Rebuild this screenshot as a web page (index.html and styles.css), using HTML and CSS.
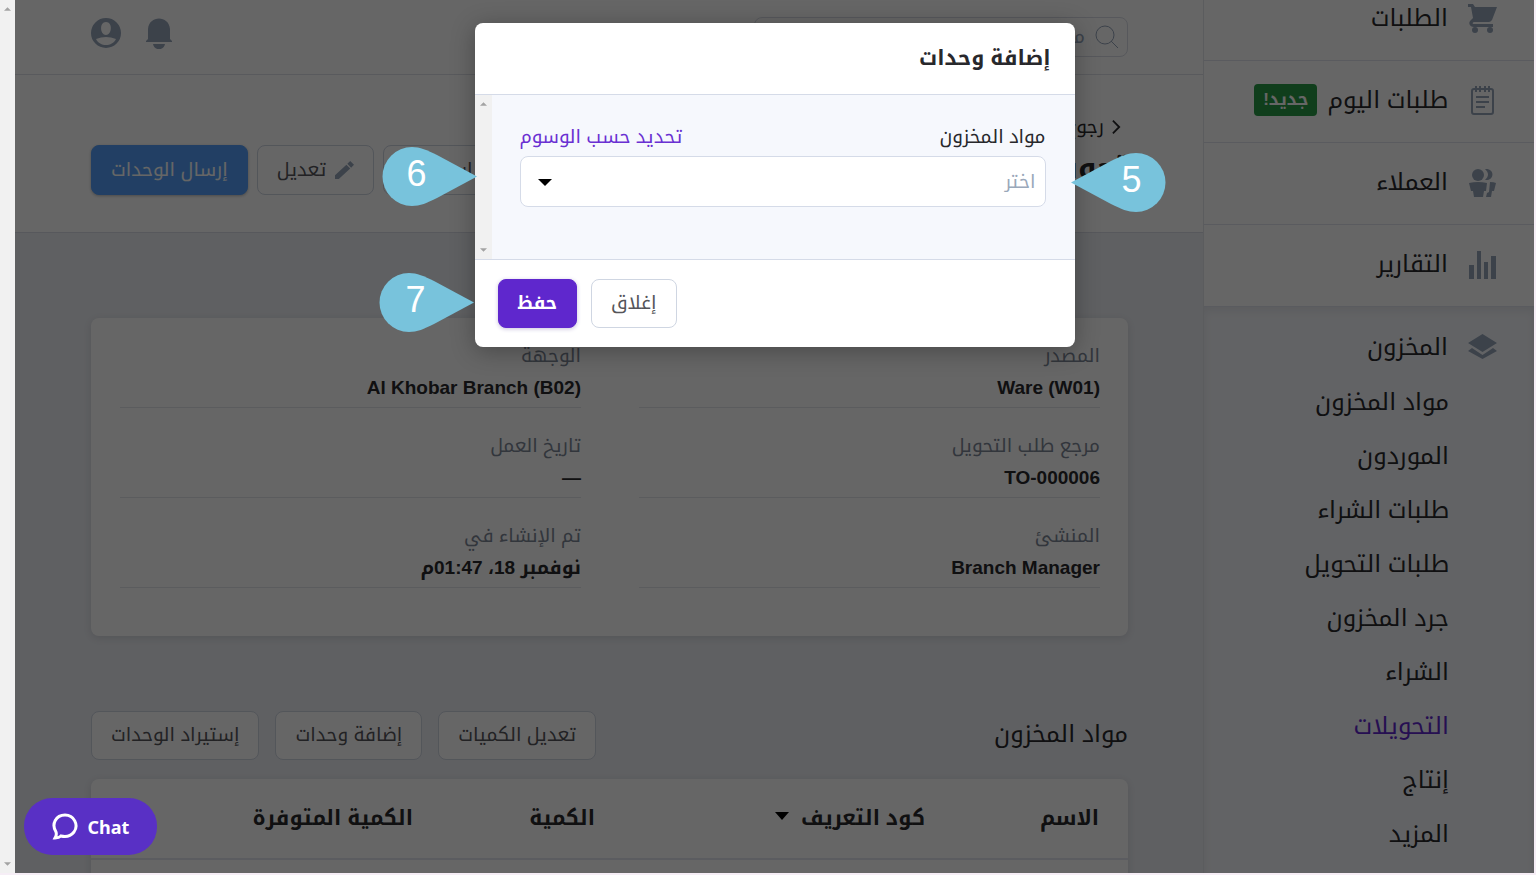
FILE: index.html
```html
<!DOCTYPE html>
<html lang="ar" dir="rtl">
<head>
<meta charset="utf-8">
<meta name="viewport" content="width=device-width, initial-scale=1">
<title>إضافة وحدات</title>
<link rel="stylesheet" href="styles.css">
</head>
<body>
<div class="frame">
  <div class="app">
    <nav class="sidebar" aria-label="القائمة">
      <a class="nav-item nav-item-first" href="#">
        <svg class="nav-icon" viewBox="0 0 29 29"><path d="M0 0h5l2 3h22l-5 13c-1 1-2 2-3 2H7c-3 0-3 2-1 2h19v3H6c-5 0-6-5-3-7l2-2L3 3H0z"/><circle cx="7" cy="26" r="3"/><circle cx="22" cy="26" r="3"/></svg>
        <span>الطلبات</span>
      </a>
      <a class="nav-item" href="#">
        <svg class="nav-icon nav-icon-line" viewBox="0 0 29 29"><rect x="4" y="3" width="21" height="25" rx="2"/><path d="M8 0v6M12 0v6M17 0v6M21 0v6M8 11h13M8 16h13M8 21h9"/></svg>
        <span>طلبات اليوم</span>
        <span class="badge">جديد!</span>
      </a>
      <a class="nav-item" href="#">
        <svg class="nav-icon" viewBox="0 0 29 29"><circle cx="10" cy="7" r="6"/><path d="M17 1c10-1 10 12 0 11 4-4 4-7 0-11zM1 15q9-2 18 0l-1 8h-2l-1 6H6l-1-6H3zM22 14q4 0 6 1l-2 8h-2l-1 6h-5l1-4 2-1z"/></svg>
        <span>العملاء</span>
      </a>
      <a class="nav-item" href="#">
        <svg class="nav-icon" viewBox="0 0 29 29"><path d="M1 15h5v14H1zM9 1h4v28H9zM16 12h4v17h-4zM23 6h5v23h-5z"/></svg>
        <span>التقارير</span>
      </a>
      <div class="nav-section">
        <a class="nav-head" href="#">
          <svg class="nav-icon" viewBox="0 0 29 29"><path d="M14.500 2L29 11 14.500 20 0 11zM4 16L0 19l14.500 8L29 19l-4-3-10.500 7z"/></svg>
          <span>المخزون</span>
        </a>
        <a class="nav-sub" href="#">مواد المخزون</a>
        <a class="nav-sub" href="#">الموردون</a>
        <a class="nav-sub" href="#">طلبات الشراء</a>
        <a class="nav-sub" href="#">طلبات التحويل</a>
        <a class="nav-sub" href="#">جرد المخزون</a>
        <a class="nav-sub" href="#">الشراء</a>
        <a class="nav-sub nav-sub-active" href="#">التحويلات</a>
        <a class="nav-sub" href="#">إنتاج</a>
        <a class="nav-sub" href="#">المزيد</a>
      </div>
    </nav>

    <main class="main">
      <header class="topbar">
        <label class="search">
          <svg class="search-icon" viewBox="0 0 24 24"><circle cx="10" cy="10" r="9"/><path d="M16 16l7 7"/></svg>
          <input class="search-input" type="search" placeholder="مساعدة" aria-label="بحث">
        </label>
        <div class="topbar-tools">
          <button class="icon-button" type="button" aria-label="الإشعارات">
            <svg class="tool-icon" viewBox="0 0 30 32"><path d="M4 22V12C5-2 25-2 26 12v10l2 2v1H2v-1zM9 27h12c-1 7-11 7-12 0z"/></svg>
          </button>
          <button class="icon-button" type="button" aria-label="الحساب">
            <svg class="tool-icon" viewBox="0 0 30 32"><path fill-rule="evenodd" d="M15 1a15 15 0 1 0 0 30 15 15 0 0 0 0-30zM15 5c7 0 6 13 0 13S8 5 15 5zM5 22q10-4 20 0c-4 8-16 8-20 0z"/></svg>
          </button>
        </div>
      </header>

      <section class="page-head">
        <div>
          <a class="back" href="#"><svg class="back-icon" viewBox="0 0 10 16"><path d="M1 1l7 7-7 7"/></svg>رجوع</a>
          <h1 class="title">تحويل</h1>
        </div>
        <div class="actions">
          <button class="btn btn-tall" type="button">استخدام</button>
          <button class="btn btn-tall" type="button">
            <svg class="pencil" viewBox="0 0 20 20"><path d="M0 15L12 4l4 4L4 19H0zM13 3l3-3 4 4-3 3z"/></svg>
            تعديل
          </button>
          <button class="btn btn-tall btn-blue" type="button">إرسال الوحدات</button>
        </div>
      </section>

      <dl class="card details">
        <div class="detail"><dt>المصدر</dt><dd>Ware (W01)</dd></div>
        <div class="detail"><dt>الوجهة</dt><dd>Al Khobar Branch (B02)</dd></div>
        <div class="detail"><dt>مرجع طلب التحويل</dt><dd>TO-000006</dd></div>
        <div class="detail"><dt>تاريخ العمل</dt><dd>—</dd></div>
        <div class="detail"><dt>المنشئ</dt><dd>Branch Manager</dd></div>
        <div class="detail"><dt>تم الإنشاء في</dt><dd>نوفمبر 18، 01:47م</dd></div>
      </dl>

      <section class="items-head">
        <h2 class="items-title">مواد المخزون</h2>
        <div class="items-actions">
          <button class="btn" type="button">تعديل الكميات</button>
          <button class="btn" type="button">إضافة وحدات</button>
          <button class="btn" type="button">إستيراد الوحدات</button>
        </div>
      </section>

      <div class="card items">
        <table class="table">
          <thead>
            <tr>
              <th class="col-name">الاسم</th>
              <th class="col-code">كود التعريف <svg class="sort" viewBox="0 0 14 8"><path d="M0 0h14L7 8z"/></svg></th>
              <th class="col-qty">الكمية</th>
              <th>الكمية المتوفرة</th>
            </tr>
          </thead>
        </table>
      </div>
    </main>

    <div class="overlay">
      <div class="modal-wrap">
        <div class="modal" role="dialog" aria-modal="true" aria-labelledby="modal-title">
          <h2 class="modal-title" id="modal-title">إضافة وحدات</h2>
          <div class="modal-body">
            <div class="form">
              <div class="form-labels">
                <label for="items">مواد المخزون</label>
                <a class="tag-link" href="#">تحديد حسب الوسوم</a>
              </div>
              <div class="select-wrap">
                <select class="select" id="items"><option>اختر</option></select>
                <svg class="caret" viewBox="0 0 14 8"><path d="M0 0h14L7 7z"/></svg>
              </div>
            </div>
            <div class="scrollbar modal-scroll" aria-hidden="true">
              <svg class="arrow" viewBox="0 0 8 4"><path d="M0 4h8L4 0z"/></svg>
              <svg class="arrow" viewBox="0 0 8 4"><path d="M0 0h8L4 4z"/></svg>
            </div>
          </div>
          <div class="modal-foot">
            <button class="btn" type="button">إغلاق</button>
            <button class="btn btn-purple" type="button">حفظ</button>
          </div>
        </div>
        <div class="pin pin-five"><svg class="pin-shape" viewBox="0 0 95 59"><path d="M0 29.500L40 8C50 3 57 0 65 0a29.500 29.500 0 0 1 0 59C57 59 50 56 40 51z"/></svg><span class="pin-number">5</span></div>
        <div class="pin pin-six"><svg class="pin-shape" viewBox="0 0 95 59"><path d="M95 29.500L55 8C45 3 38 0 30 0a29.500 29.500 0 0 0 0 59C38 59 45 56 55 51z"/></svg><span class="pin-number">6</span></div>
        <div class="pin pin-seven"><svg class="pin-shape" viewBox="0 0 95 59"><path d="M95 29.500L55 8C45 3 38 0 30 0a29.500 29.500 0 0 0 0 59C38 59 45 56 55 51z"/></svg><span class="pin-number">7</span></div>
      </div>
    </div>

    <button class="chat" type="button" dir="ltr">
      <svg class="chat-icon" viewBox="0 0 26 28"><path d="M4 19C-1 11 4 2 13 2s14 10 9 17c-4 5-9 5-13 4-2 2-4 2-6 2 1-2 2-3 1-6z"/></svg>
      Chat
    </button>
  </div>
  <div class="scrollbar" aria-hidden="true">
    <svg class="arrow" viewBox="0 0 8 4"><path d="M0 4h8L4 0z"/></svg>
    <svg class="arrow" viewBox="0 0 8 4"><path d="M0 0h8L4 4z"/></svg>
  </div>
</div>
</body>
</html>
```
FILE: styles.css
```css
* { box-sizing: border-box; }

body {
  margin: 0;
  background: #f6eef6;
  color: #28282c;
  font-family: "Liberation Sans", "Noto Kufi Arabic", "Noto Sans Arabic", "DejaVu Sans", sans-serif;
  font-size: 19px;
}

a { color: inherit; text-decoration: none; }
button, input, select { font: inherit; }
svg { display: block; flex: none; }
h1, h2, dl, dd { margin: 0; }

.frame {
  display: flex;
  height: 100vh;
  padding: 0 2px 2px 0;
}

.app {
  position: relative;
  display: flex;
  flex: 1;
  overflow: hidden;
  background: #eef0f5;
}

.scrollbar {
  display: flex;
  flex: none;
  flex-direction: column;
  align-items: center;
  justify-content: space-between;
  width: 15px;
  padding: 7px 0;
  background: #f1f1f1;
}

.arrow { width: 7px; height: 4px; fill: #a3a3a3; }

/* Sidebar */
.sidebar {
  flex: none;
  width: 331px;
  border-left: 1px solid #e4e6ec;
  background: #fff;
  font-size: 24px;
}

.nav-item, .nav-head {
  display: flex;
  align-items: center;
  gap: 20px;
  height: 82px;
  padding: 0 37px 3px;
  border-bottom: 1px solid #e2e4ee;
}

.nav-item-first { margin-top: -21px; }
.nav-icon { width: 29px; height: 29px; fill: #96a5ba; }
.nav-icon-line { fill: none; stroke: #96a5ba; stroke-width: 2; }

.badge {
  margin-right: -10px;
  padding: 0 9px;
  border-radius: 4px;
  background: #289b46;
  color: #fff;
  font-size: 17px;
  font-weight: bold;
  line-height: 32px;
}

.nav-section {
  height: 100%;
  background: #f6f8fc;
  box-shadow: inset 0 4px 8px #e4e6ec;
}

.nav-head { height: 68px; padding-top: 14px; border: 0; }
.nav-sub { display: block; padding-right: 85px; line-height: 54px; }
.nav-sub-active { color: #6027cc; }

/* Main column */
.main { flex: 1; min-width: 0; }

.topbar {
  display: flex;
  align-items: center;
  justify-content: space-between;
  height: 75px;
  padding: 0 75px 0 76px;
  border-bottom: 1px solid #dfe1e8;
  background: #fff;
}

.search {
  display: flex;
  align-items: center;
  gap: 10px;
  width: 374px;
  height: 40px;
  padding: 0 8px;
  border: 1px solid #dadde6;
  border-radius: 8px;
}

.search-icon { width: 24px; height: 24px; fill: none; stroke: #96a5ba; stroke-width: 1; }
.search-input { flex: 1; min-width: 0; padding: 0; border: 0; background: none; outline: 0; }
.search-input::placeholder { color: #96a5ba; opacity: 1; }
.topbar-tools { display: flex; gap: 23px; padding-bottom: 8px; }
.icon-button { padding: 0; border: 0; background: none; }
.tool-icon { width: 30px; height: 32px; fill: #96a5ba; }

.page-head {
  display: flex;
  justify-content: space-between;
  height: 158px;
  padding: 36px 75px 0 76px;
  border-bottom: 1px solid #d9dce6;
  background: #fff;
}

.back { display: flex; align-items: center; gap: 8px; padding-right: 7px; line-height: 32px; }
.back-icon { width: 9px; height: 16px; fill: none; stroke: #28282c; stroke-width: 2; }
.title { font-size: 30px; line-height: 50px; }
.actions { display: flex; align-items: flex-start; gap: 9px; padding-top: 34px; }

.btn {
  display: flex;
  align-items: center;
  justify-content: center;
  gap: 9px;
  height: 49px;
  padding: 0 19px 2px;
  border: 1px solid #cfd6e2;
  border-radius: 8px;
  background: #fff;
  color: #55555a;
}

.btn-tall { height: 50px; padding-bottom: 0; }
.btn-blue { border-color: #559ffa; background: #559ffa; color: #fff; box-shadow: 0 1px 3px #bbb; }
.btn-purple { border-color: #5f27cd; background: #5f27cd; color: #fff; font-size: 18px; font-weight: bold; box-shadow: 0 1px 4px #c9c2dd; }
.pencil { width: 19px; height: 19px; fill: #96a5ba; }

.card {
  margin: 0 75px 0 76px;
  border-radius: 8px;
  background: #fff;
  box-shadow: 0 2px 8px #d0d3da;
}

.details {
  display: grid;
  grid-template-columns: 1fr 1fr;
  column-gap: 58px;
  margin-top: 85px;
  padding: 0 28px 48px 29px;
}

.detail { padding: 22px 0 2px; border-bottom: 1px solid #e4e6ea; }
.detail dt { color: #7d8797; line-height: 31px; }
.detail dd { font-weight: bold; line-height: 34px; }

.items-head {
  display: flex;
  align-items: center;
  justify-content: space-between;
  margin: 75px 75px 19px 76px;
}

.items-title { padding-bottom: 3px; font-size: 24px; font-weight: normal; }
.items-actions { display: flex; gap: 16px; }

.table { width: 100%; border-collapse: collapse; table-layout: fixed; font-size: 21px; }
.table th { height: 80px; padding: 0 29px 2px 0; border-bottom: 2px solid #e4e6f0; text-align: right; white-space: nowrap; }
.items { height: 160px; }
.table .col-name { width: 174px; }
.table .col-code { width: 330px; }
.table .col-qty { width: 182px; }
.sort { display: inline-block; width: 14px; height: 8px; margin-right: 6px; vertical-align: 5px; }

/* Dialog */
.overlay {
  position: absolute;
  inset: 0;
  padding-top: 23px;
  background: rgba(0, 0, 0, .6);
}

.modal-wrap { position: relative; width: 600px; margin: 0 auto; }

.modal {
  overflow: hidden;
  border-radius: 8px;
  background: #fff;
  box-shadow: 0 4px 24px rgba(0, 0, 0, .3);
}

.modal-title { padding: 0 24px 2px; font-size: 21px; line-height: 69px; }
.modal-body { display: flex; border: solid #d5dbe8; border-width: 1px 0; background: #f6f8fd; }
.modal-scroll { width: 17px; }
.form { flex: 1; padding: 26px 29px 52px 28px; }
.form-labels { display: flex; justify-content: space-between; margin-bottom: 3px; line-height: 32px; }
.tag-link { color: #6a30d2; }
.select-wrap { position: relative; }

.select {
  display: block;
  width: 100%;
  height: 51px;
  padding: 0 9px;
  border: 1px solid #d5dbe8;
  border-radius: 8px;
  background: #fff;
  color: #9aa8ba;
  appearance: none;
}

.caret { position: absolute; top: 23px; left: 18px; width: 14px; height: 8px; }

.modal-foot { display: flex; justify-content: flex-end; gap: 14px; padding: 19px 23px; }

/* Numbered callouts */
.pin { position: absolute; width: 95px; height: 59px; }
.pin-shape { width: 95px; height: 59px; fill: #78c3dc; }

.pin-number {
  position: absolute;
  top: 0;
  left: 0;
  width: 70px;
  color: #fff;
  font-size: 36px;
  line-height: 54px;
  text-align: center;
}

.pin-five { top: 130px; left: 596px; }
.pin-five .pin-number { left: 26px; }
.pin-six { top: 124px; left: -93px; }
.pin-seven { top: 250px; left: -96px; }
.pin-seven .pin-number { width: 74px; }

.chat {
  position: absolute;
  bottom: 18px;
  left: 9px;
  display: flex;
  align-items: center;
  justify-content: center;
  gap: 10px;
  width: 133px;
  height: 57px;
  border: 0;
  border-radius: 28px;
  background: #5930c5;
  color: #fff;
  font-family: "Noto Sans", sans-serif;
  font-size: 18px;
  font-weight: bold;
}

.chat-icon { width: 26px; height: 28px; fill: none; stroke: #fff; stroke-width: 3; }
```
